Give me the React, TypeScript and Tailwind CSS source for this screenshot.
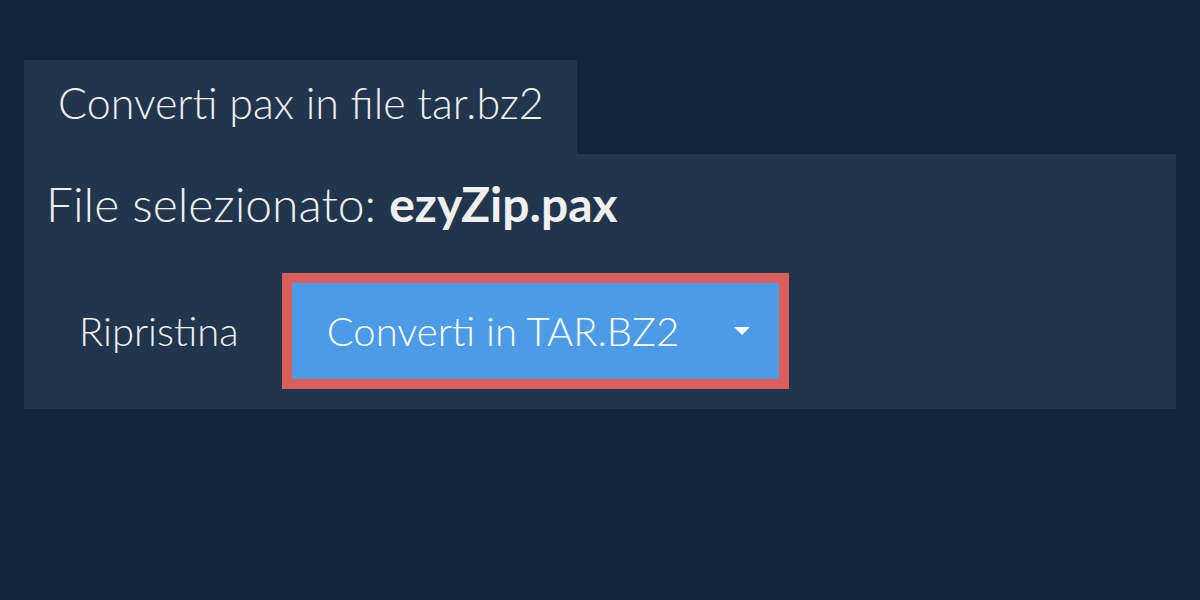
export default function App() {
  return (
    <div
      className="h-[600px] w-[1200px] bg-[#10243a] px-6 pt-[60px] text-[#f0f0f0]"
      style={{ fontFamily: "Lato, 'Open Sans', sans-serif" }}
    >
      <div className="h-[94px] w-[553px] bg-[#21354d] pl-[34px] pt-[21px]">
        <div className="text-[43px] font-light leading-none">Converti pax in file tar.bz2</div>
      </div>
      <div className="h-[255px] bg-[#21354d] px-[22px] pt-[26px]">
        <div className="text-[48px] font-light leading-none">
          File selezionato: <span className="font-bold">ezyZip.pax</span>
        </div>
        <div className="mt-[45px] flex items-center">
          <span className="ml-[33px] text-[40px] font-light leading-none">Ripristina</span>
          <div className="ml-[43px] border-[10px] border-[#dc5e5c]">
            <button className="flex h-[96px] w-[487px] items-center justify-between bg-[#4b9be6] pl-[35px] pr-[29px] text-white">
              <span className="text-[40px] font-light leading-none">Converti in TAR.BZ2</span>
              <svg width="16" height="8" viewBox="0 0 16 8">
                <path d="M0 0h16L8 8z" fill="white" />
              </svg>
            </button>
          </div>
        </div>
      </div>
    </div>
  );
}
